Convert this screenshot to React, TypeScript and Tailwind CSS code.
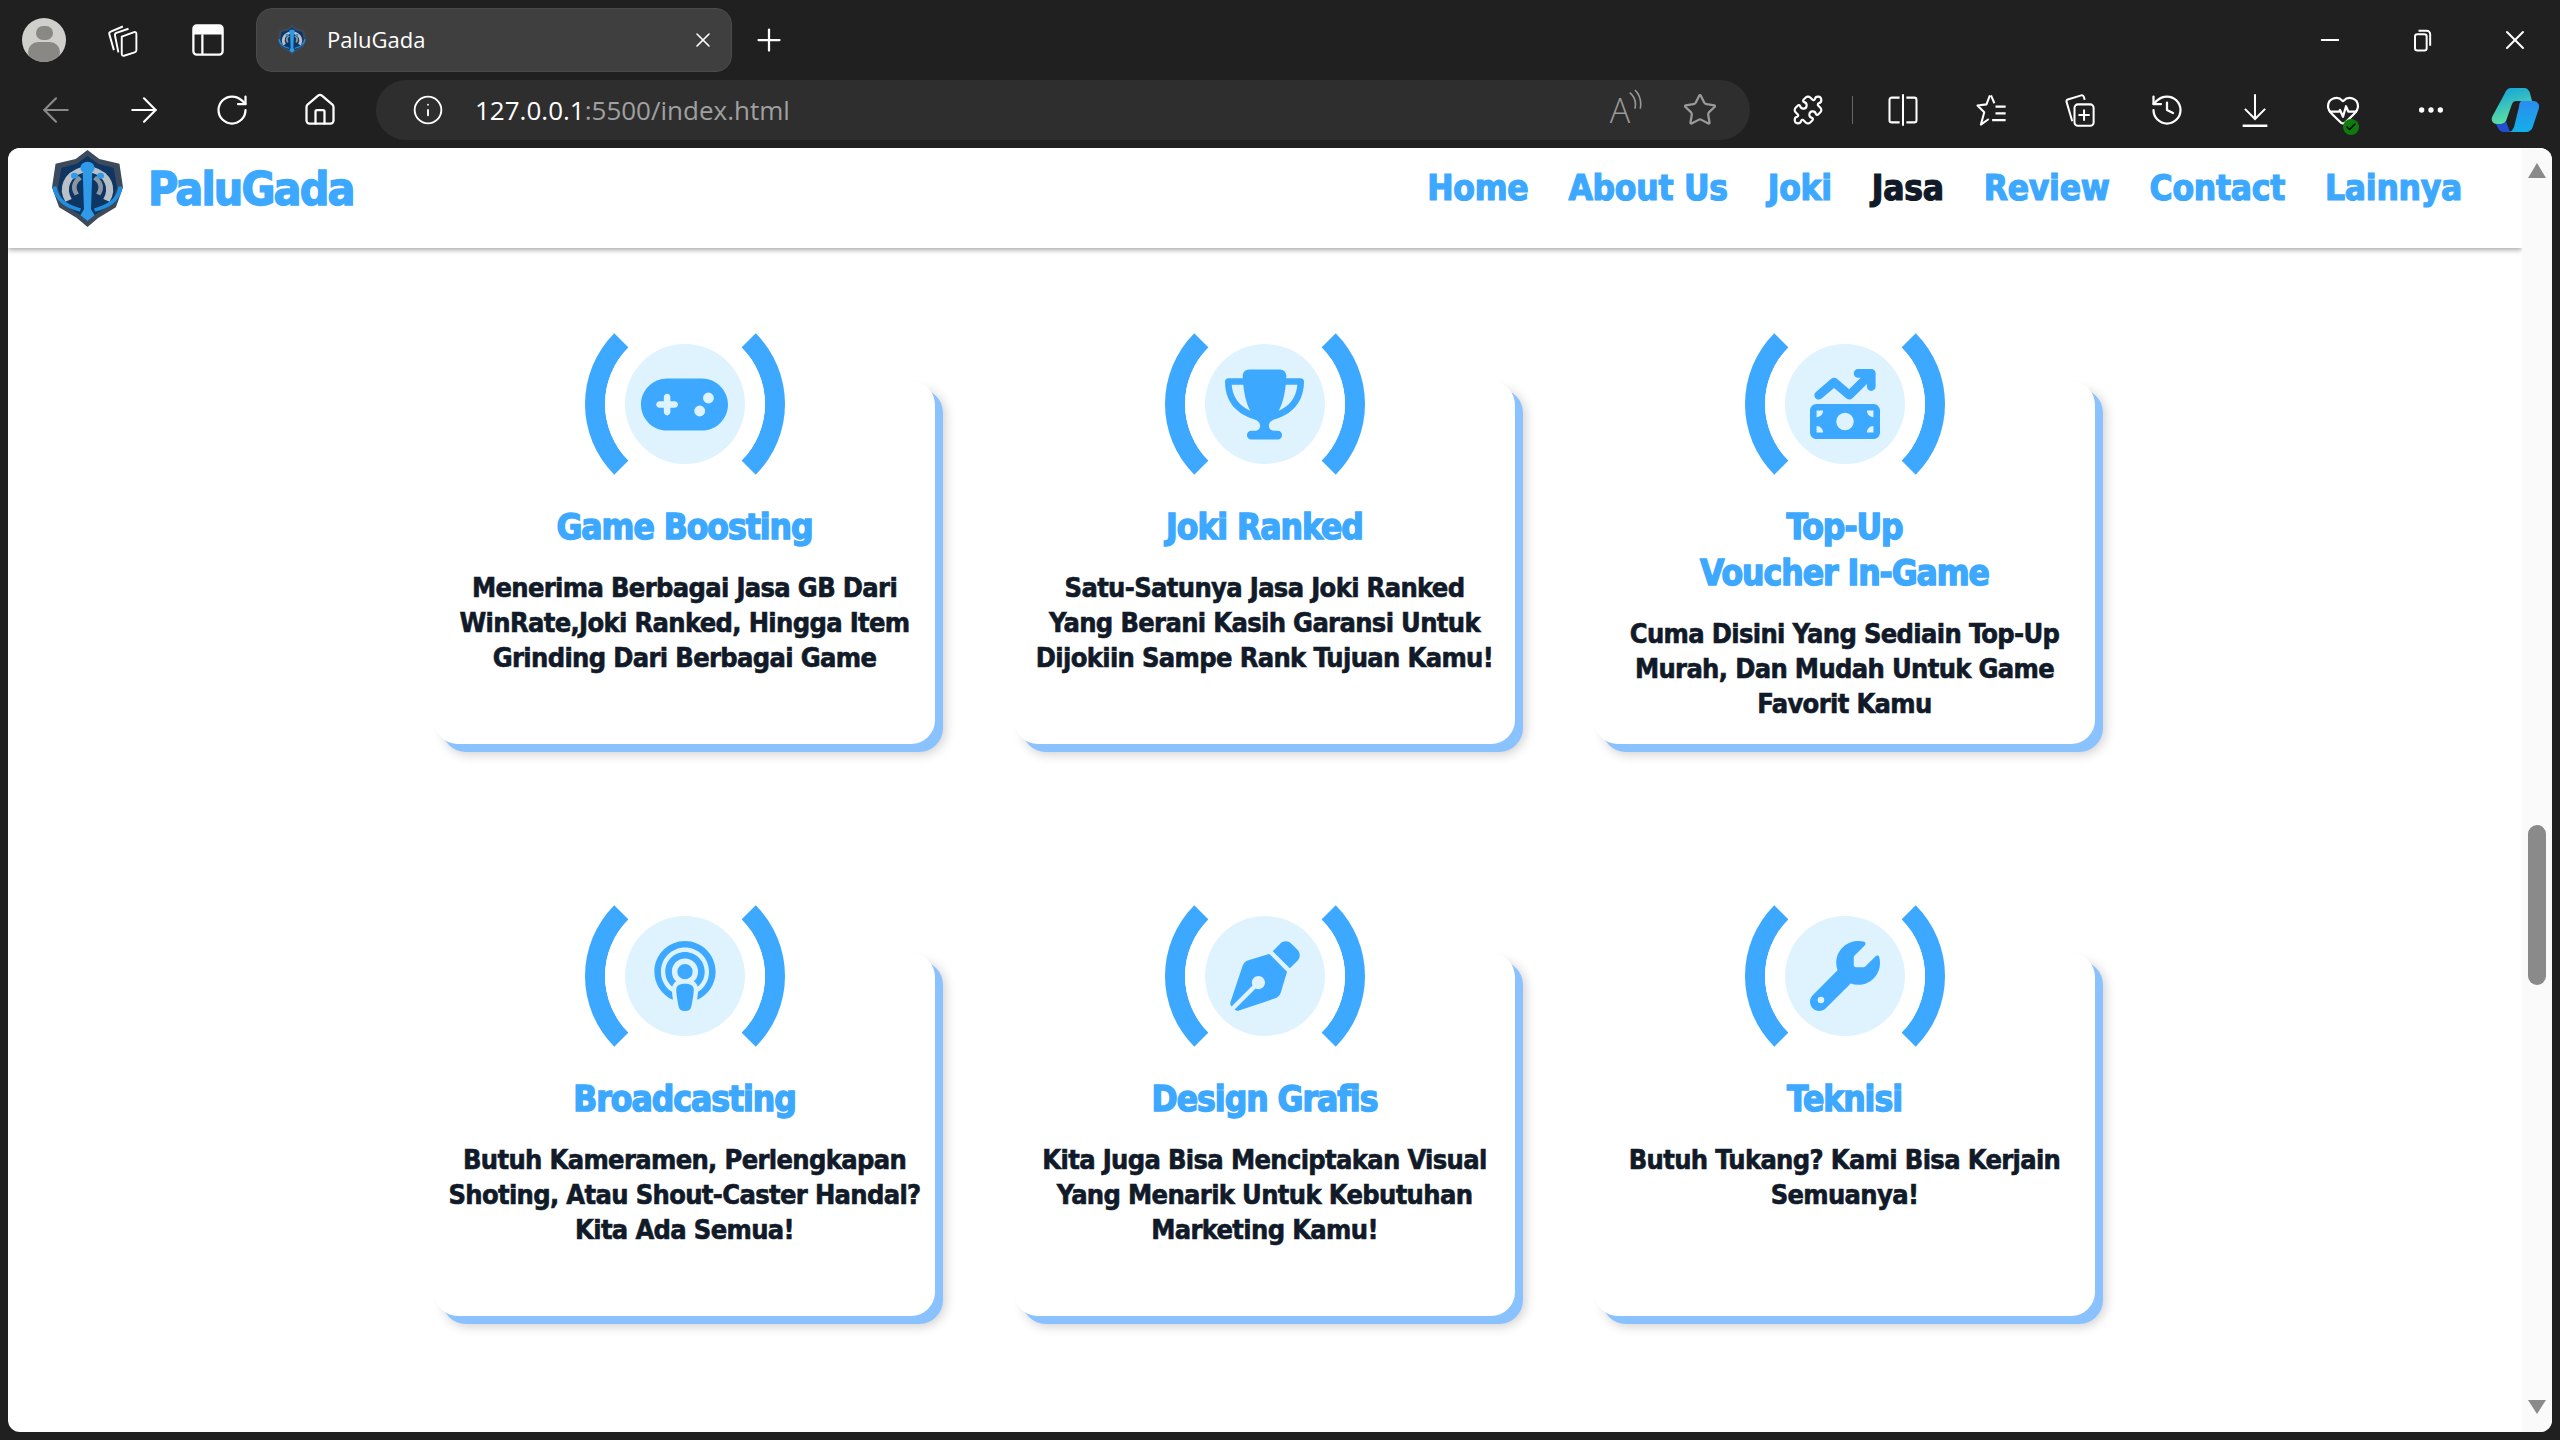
import { ReactNode } from "react";
import { ArrowLeft, ArrowRight, RotateCw, Home, Info, Star, Puzzle, History, HeartPulse, MoreHorizontal, X, Plus, Minus, Check } from "lucide-react";
import { FaGamepad, FaTrophy, FaMoneyBillTrendUp, FaPodcast, FaPenNib, FaWrench } from "react-icons/fa6";

const heavy = "[font-family:'DejaVu_Sans_Condensed','DejaVu_Sans',sans-serif] font-bold";

const services = [
  { icon: <FaGamepad className="text-[87px]" />, title: ["Game Boosting"], text: ["Menerima Berbagai Jasa GB Dari", "WinRate,Joki Ranked, Hingga Item", "Grinding Dari Berbagai Game"] },
  { icon: <FaTrophy className="text-[79px]" />, title: ["Joki Ranked"], text: ["Satu-Satunya Jasa Joki Ranked", "Yang Berani Kasih Garansi Untuk", "Dijokiin Sampe Rank Tujuan Kamu!"] },
  { icon: <FaMoneyBillTrendUp />, title: ["Top-Up", "Voucher In-Game"], text: ["Cuma Disini Yang Sediain Top-Up", "Murah, Dan Mudah Untuk Game", "Favorit Kamu"] },
  { icon: <FaPodcast />, title: ["Broadcasting"], text: ["Butuh Kameramen, Perlengkapan", "Shoting, Atau Shout-Caster Handal?", "Kita Ada Semua!"] },
  { icon: <FaPenNib />, title: ["Design Grafis"], text: ["Kita Juga Bisa Menciptakan Visual", "Yang Menarik Untuk Kebutuhan", "Marketing Kamu!"] },
  { icon: <FaWrench />, title: ["Teknisi"], text: ["Butuh Tukang? Kami Bisa Kerjain", "Semuanya!"] },
];

const navLinks = ["Home", "About Us", "Joki", "Jasa", "Review", "Contact", "Lainnya"];

function Logo({ className }: { className: string }) {
  return (
    <svg viewBox="6 1 60 78" preserveAspectRatio="none" className={className}>
      <path d="M36 1l10 9 17 5 3 24-6 20-15 11-9 9-9-9-15-11L6 39l3-24 17-5z" fill="#3d4a5c" />
      <path d="M36 7l9 8 13 4 3 20-5 17-13 10-7 7-7-7-13-10-5-17 3-20 13-4z" fill="#0f3563" />
      <path d="M20 52c-6-12-2-26 12-31M52 52c6-12 2-26-12-31" fill="none" stroke="#b8c0c8" strokeWidth="6" />
      <path d="M27 46c-4-7-2-13 3-17M45 46c4-7 2-13-3-17" fill="none" stroke="#8b96a3" strokeWidth="4" />
      <path d="M8 38c2 14 10 20 22 24M64 38c-2 14-10 20-22 24" fill="none" stroke="#1f8fe0" strokeWidth="3.5" />
      <circle cx="36" cy="19" r="6" fill="#2f9be8" />
      <circle cx="25" cy="27" r="3" fill="#2f9be8" />
      <circle cx="47" cy="27" r="3" fill="#2f9be8" />
      <path d="M32 24h8l-1 37 3 6-6 6-6-6 3-6z" fill="#2f9be8" />
    </svg>
  );
}

function ServiceCard({ icon, title, text }: { icon: ReactNode; title: string[]; text: string[] }) {
  return (
    <div className="flex h-[363px] flex-col items-center rounded-3xl bg-white text-center shadow-[8px_8px_0_#8ac2ff,10px_10px_12px_rgba(0,0,0,0.2)]">
      <div className="-mt-[77px] flex h-[200px] w-[200px] items-center justify-center rounded-full border-[20px] border-x-[#3ca8ff] border-y-transparent">
        <div className="flex h-[160px] w-[160px] shrink-0 items-center justify-center rounded-full bg-white">
          <div className="flex h-[120px] w-[120px] items-center justify-center rounded-full bg-[#dff3ff] text-[70px] text-[#3ca8ff]">
            {icon}
          </div>
        </div>
      </div>
      <h3 className={`${heavy} text-[35px] leading-[46px] tracking-[-1px] text-[#3ca8ff] [-webkit-text-stroke:1.400px]`}>
        {title.map((line) => (
          <div key={line}>{line}</div>
        ))}
      </h3>
      <div className={`${heavy} mt-5 text-[27px] leading-[35px] tracking-[-0.650px] whitespace-nowrap text-[#111a28] [-webkit-text-stroke:0.600px]`}>
        {text.map((line) => (
          <div key={line}>{line}</div>
        ))}
      </div>
    </div>
  );
}

function ToolCell({ children, className = "" }: { children: ReactNode; className?: string }) {
  return <div className={`relative flex h-[60px] w-[88px] shrink-0 items-center justify-center text-white ${className}`}>{children}</div>;
}

function BrowserChrome() {
  return (
    <div className="h-[148px] shrink-0 bg-[#202020] [font-family:'Open_Sans',sans-serif] text-white">
      {/* tab strip */}
      <div className="flex h-20 items-center">
        <div className="ml-[22px] flex h-11 w-11 flex-col items-center overflow-hidden rounded-full bg-[#cfcfcb]">
          <div className="mt-[8px] h-[17px] w-[17px] rounded-full bg-[#8a8885]" />
          <div className="mt-[2px] h-6 w-8 rounded-full bg-[#8a8885]" />
        </div>
        <svg viewBox="0 0 32 32" className="ml-[40px] h-9 w-9" fill="none" stroke="white" strokeWidth="1.7" strokeLinejoin="round">
          <path d="M14 13l11-4c1-.3 2 .3 2 1.500V25c0 1-.5 1.700-1.500 2L16 30c-1 .3-2-.3-2-1.500z" />
          <path d="M11 27L8 12c-.2-1 .2-2 1.200-2.400L20 6M7 25L3 11c-.3-1 .2-2 1.200-2.400L15 4" />
        </svg>
        <svg viewBox="0 0 32 32" className="ml-[48px] h-9 w-9">
          <rect x="3" y="3" width="26" height="26" rx="3" fill="none" stroke="white" strokeWidth="2" />
          <path d="M3 6a3 3 0 013-3h20a3 3 0 013 3v5H3z" fill="white" />
          <path d="M11 11v18" stroke="white" strokeWidth="2" />
        </svg>
        <div className="ml-[30px] flex h-16 w-[476px] items-center rounded-2xl border border-[#4a4a4a] bg-[#3f3f3f]">
          <Logo className="ml-[21px] h-[30px] w-[28px] blur-[0.3px]" />
          <span className="ml-[21px] -mt-[2px] text-[22px] leading-none">PaluGada</span>
          <X className="ml-auto mr-[16px] h-6 w-6" strokeWidth={1.6} />
        </div>
        <Plus className="ml-[19px] h-9 w-9" strokeWidth={1.5} />
        <Minus className="ml-[1529px] h-7 w-7" strokeWidth={1.8} />
        <svg viewBox="0 0 24 24" className="ml-[64px] h-7 w-7" fill="none" stroke="white" strokeWidth="1.7">
          <rect x="6" y="7" width="10" height="14" rx="2" />
          <path d="M9 4h7a3 3 0 013 3v10" />
        </svg>
        <X className="ml-[63px] h-8 w-8" strokeWidth={1.5} />
      </div>
      {/* address bar row */}
      <div className="flex h-[68px] items-start pl-3">
        <ToolCell><ArrowLeft className="h-10 w-10 text-[#8a8a8a]" strokeWidth={1.3} /></ToolCell>
        <ToolCell><ArrowRight className="h-10 w-10" strokeWidth={1.3} /></ToolCell>
        <ToolCell><RotateCw className="h-9 w-9" strokeWidth={1.5} /></ToolCell>
        <ToolCell><Home className="h-9 w-9" strokeWidth={1.5} /></ToolCell>
        <div className="ml-3 flex h-[60px] w-[1374px] shrink-0 items-center rounded-full bg-[#2e2e2e]">
          <Info className="ml-[36px] h-8 w-8" strokeWidth={1.4} />
          <span className="ml-[31px] text-[26px] leading-none text-[#a0a0a0]">
            <span className="text-white">127.0.0.1</span>:5500/index.html
          </span>
          <div className="relative ml-auto -mr-[4px] flex h-10 w-10 items-center justify-center text-[#9a9a9a]">
            <span className="text-[34px] leading-none font-light">A</span>
            <svg viewBox="0 0 12 20" className="absolute -right-[3px] -top-[2px] h-7 w-4" fill="none" stroke="currentColor" strokeWidth="1.2">
              <path d="M2 3c4 3 5 7 4 12M6 1c4 4 5 8 4 14" />
            </svg>
          </div>
          <Star className="ml-[46px] mr-[32px] h-9 w-9 text-[#9a9a9a]" strokeWidth={1.5} />
        </div>
        <ToolCell className="ml-[14px]"><Puzzle className="h-8 w-8" strokeWidth={1.6} /></ToolCell>
        <div className="mt-4 h-[28px] w-px shrink-0 bg-[#666]" />
        <ToolCell className="ml-[6px]">
          <svg viewBox="0 0 32 32" className="h-9 w-9" fill="none" stroke="white" strokeWidth="1.8" strokeLinejoin="round">
            <path d="M13 5H6a2 2 0 00-2 2v18a2 2 0 002 2h7M19 5h7a2 2 0 012 2v18a2 2 0 01-2 2h-7M16 2v28" />
          </svg>
        </ToolCell>
        <ToolCell>
          <svg viewBox="0 0 32 32" className="h-9 w-9" fill="none" stroke="white" strokeWidth="1.8" strokeLinejoin="round">
            <path d="M15 3l-3 8-8 1 6 6-3 11 7-5M16 3l3 7M20 13h9M20 19h9M17 25h12" />
          </svg>
        </ToolCell>
        <ToolCell>
          <svg viewBox="0 0 32 32" className="h-9 w-9" fill="none" stroke="white" strokeWidth="1.8" strokeLinejoin="round">
            <path d="M10 26L5 9c-.3-1 .2-2 1-2.400L18 3c1-.3 2 .3 2.400 1.500L21 7" />
            <rect x="12" y="11" width="17" height="19" rx="3" />
            <path d="M20.500 15.500v10M15.500 20.500h10" />
          </svg>
        </ToolCell>
        <ToolCell><History className="h-9 w-9" strokeWidth={1.5} /></ToolCell>
        <ToolCell>
          <svg viewBox="0 0 32 32" className="h-9 w-9" fill="none" stroke="white" strokeWidth="1.8">
            <path d="M16 2v22M7 15l9 9 9-9" />
            <path d="M5 30h22" strokeWidth="2.2" />
          </svg>
        </ToolCell>
        <ToolCell>
          <HeartPulse className="h-9 w-9" strokeWidth={1.5} />
          <div className="absolute bottom-[5px] left-[44px] flex h-[16px] w-[16px] items-center justify-center rounded-full bg-[#0f7b0f]">
            <Check className="h-3 w-3 text-black" strokeWidth={3} />
          </div>
        </ToolCell>
        <ToolCell><MoreHorizontal className="h-8 w-8" strokeWidth={2} /></ToolCell>
        <svg viewBox="0 0 48 44" className="ml-[16px] mt-2 h-11 w-12 shrink-0">
          <defs>
            <linearGradient id="copA" x1="0" y1="0" x2="0.3" y2="1">
              <stop offset="0" stopColor="#0fa0e0" />
              <stop offset="1" stopColor="#5fe0a0" />
            </linearGradient>
            <linearGradient id="copB" x1="0" y1="0" x2="0" y2="1">
              <stop offset="0" stopColor="#2c8cf0" />
              <stop offset="1" stopColor="#12b0e8" />
            </linearGradient>
          </defs>
          <path d="M14 5c1-3 3-5 6-5h13c3 0 5 2 6 5l2 8H25c-2 0-3 1-4 3l-6 17c-1 2-3 3-5 3H6c-4 0-6-3-5-7z" fill="url(#copA)" />
          <path d="M15 33l4 11h-6c-3 0-5-2-6-4l-2-4h5c2 0 4-1 5-3z" fill="#2050d0" />
          <path d="M30 13h12c4 0 7 3 6 7l-6 18c-1 4-4 6-7 6H17c3 0 5-2 6-5l5-20c0-3 1-5 2-6z" fill="url(#copB)" />
        </svg>
      </div>
    </div>
  );
}

function Scrollbar() {
  return (
    <aside className="flex w-[30px] shrink-0 flex-col items-center bg-[#fafafa]">
      <div className="mt-[15px] h-0 w-0 border-x-[9px] border-b-[15px] border-x-transparent border-b-[#8a8a8a]" />
      <div className="mt-[647px] h-[160px] w-[18px] rounded-full bg-[#8a8a8a]" />
      <div className="mt-auto mb-[18px] h-0 w-0 border-x-[9px] border-t-[14px] border-x-transparent border-t-[#8a8a8a]" />
    </aside>
  );
}

export default function App() {
  return (
    <div className="flex h-screen flex-col overflow-hidden bg-[#202020]">
      <BrowserChrome />
      <div className="mx-2 mb-2 flex min-h-0 flex-1 overflow-hidden rounded-xl bg-white">
        <div className="min-w-0 flex-1">
          <header className="flex h-[100px] items-start justify-between bg-white pr-[60px] pl-[44px] shadow-[0_2px_5px_rgba(0,0,0,0.35)]">
            <div className="flex items-center">
              <Logo className="mt-[2px] h-[77px] w-[71px] blur-[0.6px]" />
              <span className={`${heavy} ml-[25px] mt-[4px] text-[46px] tracking-[-1.800px] text-[#3ca8ff] [-webkit-text-stroke:1.400px]`}>PaluGada</span>
            </div>
            <nav className={`${heavy} mt-[15px] flex gap-10 text-[35px] leading-[50px] tracking-[-0.250px] text-[#3ca8ff] [-webkit-text-stroke:1.200px]`}>
              {navLinks.map((link) => (
                <a key={link} className={link === "Jasa" ? "text-[#111a28]" : ""}>
                  {link}
                </a>
              ))}
            </nav>
          </header>
          <main className="ml-[426px] mt-[133px] grid grid-cols-[repeat(3,501px)] gap-x-[79px] gap-y-[209px]">
            {services.map((s) => (
              <ServiceCard key={s.title[0]} icon={s.icon} title={s.title} text={s.text} />
            ))}
          </main>
        </div>
        <Scrollbar />
      </div>
    </div>
  );
}
